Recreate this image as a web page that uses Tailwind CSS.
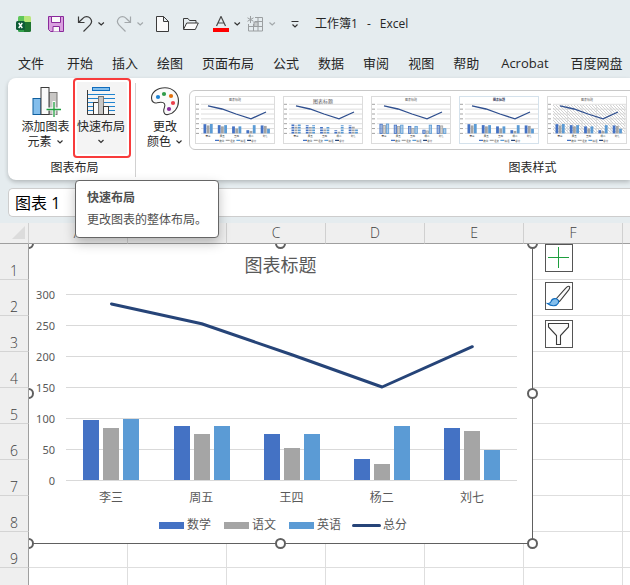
<!DOCTYPE html>
<html lang="zh-CN">
<head>
  <meta charset="UTF-8">
  <meta name="viewport" content="width=device-width, initial-scale=1.0">
  <title>工作簿1 - Excel</title>
  <script src="https://cdn.jsdelivr.net/npm/@tailwindcss/browser@4"></script>
</head>
<body class="h-screen overflow-hidden flex flex-col bg-[#e5ecef] text-[#262626] font-['Open_Sans','Noto_Sans_CJK_SC',sans-serif]">

  <!-- Title bar -->
  <header class="h-12 shrink-0 flex items-center pl-4 text-xs whitespace-nowrap">
    <svg class="w-4 h-4 shrink-0" viewBox="0 0 16 16">
      <path d="M2 1.500a1.500 1.500 0 0 1 1.500-1.500H8v6H2z" fill="#5fc65a"/>
      <path d="M8 0h5.500a1.500 1.500 0 0 1 1.500 1.500V6H8z" fill="#b9e67a"/>
      <path d="M2 6h6v10H3.500A1.500 1.500 0 0 1 2 14.500z" fill="#33a04b"/>
      <path d="M8 6h7v8.500a1.500 1.500 0 0 1-1.500 1.500H8z" fill="#1e7430"/>
      <rect x="0" y="5" width="9" height="9" rx="1.500" fill="#0e5c37"/>
      <path d="M2.700 7l3.600 5M6.300 7l-3.600 5" stroke="#fff" stroke-width="1.400"/>
    </svg>
    <button class="ml-4" aria-label="保存">
      <svg class="w-4 h-4" viewBox="0 0 16 16" fill="none" stroke="#8a2a9b">
        <path d="M.5.5h15v15h-13l-2-2z" fill="#d9a0df"/>
        <path d="M3.500.5h9v6h-9z" fill="#fafafa"/>
        <path d="M5 15.500v-5h6.500v5" fill="#fafafa"/>
      </svg>
    </button>
    <button class="ml-3 flex items-center" aria-label="撤消">
      <svg class="w-[18px] h-[18px]" viewBox="0 0 18 18" fill="none" stroke="#3b3b3b" stroke-width="1.200">
        <path d="M2.500 1.500v6h6M2.500 7.500L7 3.200c2-2 5.300-2 7.100 0s1.800 4.700 0 6.600L7.500 16.500"/>
      </svg>
      <svg class="w-2 h-2 ml-[3px]" viewBox="0 0 8 8" fill="none" stroke="#333" stroke-width="1.200"><path d="M1.500 2.500L4.200 5l2.700-2.500"/></svg>
    </button>
    <button class="ml-2 flex items-center" aria-label="恢复" disabled>
      <svg class="w-[18px] h-[18px] ml-[2px]" viewBox="0 0 18 18" fill="none" stroke="#a3a8ab" stroke-width="1.200">
        <path d="M15.500 1.500v6h-6M15.500 7.500L11 3.200c-2-2-5.300-2-7.100 0s-1.800 4.700 0 6.600l6.600 6.700"/>
      </svg>
      <svg class="w-2 h-2 ml-[3px]" viewBox="0 0 8 8" fill="none" stroke="#a3a8ab" stroke-width="1.200"><path d="M1.500 2.500L4.200 5l2.700-2.500"/></svg>
    </button>
    <button class="ml-3" aria-label="新建">
      <svg class="w-[13px] h-4" viewBox="0 0 13 16" fill="#fafafa" stroke="#3b3b3b">
        <path d="M.5.5h7l5 5v10H.5zM7.500.5v5h5"/>
      </svg>
    </button>
    <button class="ml-[14px]" aria-label="打开">
      <svg class="w-4 h-[14px]" viewBox="0 0 16 14" fill="none" stroke="#3b3b3b">
        <path d="M.5 12V1.500h4.500l1.500 2h6.500v2.500"/>
        <path d="M.5 12.500L3.700 6h11.600l-3 6.500z" fill="#fafafa"/>
      </svg>
    </button>
    <button class="ml-[14px] flex items-center" aria-label="字体颜色">
      <svg class="w-4 h-4" viewBox="0 0 16 16">
        <path d="M3.500 10L8 .5 12.500 10M5 7h6" fill="none" stroke="#4a4a4a" stroke-width="1.200"/>
        <rect y="12" width="16" height="4" fill="#f00"/>
      </svg>
      <svg class="w-2 h-2 ml-1" viewBox="0 0 8 8" fill="none" stroke="#333" stroke-width="1.200"><path d="M1.500 2.500L4.200 5l2.700-2.500"/></svg>
    </button>
    <button class="ml-[6px] flex items-center" aria-label="插入表格" disabled>
      <svg class="w-4 h-4" viewBox="0 0 16 16" fill="none" stroke="#9b9fa1">
        <path d="M8 1.500h7.500v13.500H1.500V8M8 5.500h7.500M1.500 10.500h14M6.500 8v7M11 1.500v13.500"/>
        <path d="M7 6h4v4.500H7z" fill="#c9cdce"/>
        <path d="M3.500 0v7M.5 1.800l6 3.500M6.500 1.800l-6 3.500"/>
      </svg>
      <svg class="w-2 h-2 ml-[5px]" viewBox="0 0 8 8" fill="none" stroke="#a3a8ab" stroke-width="1.200"><path d="M1.500 2.500L4.200 5l2.700-2.500"/></svg>
    </button>
    <button class="ml-[15px]" aria-label="自定义快速访问工具栏">
      <svg class="w-2 h-2" viewBox="0 0 8 8" fill="none" stroke="#333" stroke-width="1.200"><path d="M.5 1.500h7M1.500 4.500L4 7l2.500-2.500"/></svg>
    </button>
    <h1 class="ml-4 flex gap-[9px]"><span>工作簿1</span><span>-</span><span>Excel</span></h1>
  </header>

  <!-- Ribbon tabs -->
  <nav class="h-[30px] shrink-0 flex items-center gap-[19px] pl-[18px] pt-px text-[13px] whitespace-nowrap">
    <a href="#" class="mr-1">文件</a>
    <a href="#">开始</a>
    <a href="#">插入</a>
    <a href="#">绘图</a>
    <a href="#">页面布局</a>
    <a href="#">公式</a>
    <a href="#">数据</a>
    <a href="#">审阅</a>
    <a href="#">视图</a>
    <a href="#">帮助</a>
    <a href="#" class="px-[3px]">Acrobat</a>
    <a href="#">百度网盘</a>
  </nav>

  <!-- Ribbon -->
  <div class="relative shrink-0 ml-2">
    <div class="h-[102px] flex overflow-hidden bg-white rounded-l-lg text-xs whitespace-nowrap">
      <section class="shrink-0 flex flex-col pl-[10px] pr-1">
        <div class="flex h-20">
          <button class="w-[55px] pt-[9px] flex flex-col items-center leading-[15px]">
            <svg class="w-[30px] h-8 shrink-0" viewBox="0 0 30 32" fill="none">
              <rect x="2" y="11.500" width="8" height="16" fill="#83beec" stroke="#0f5f9e"/>
              <rect x="18" y="5.500" width="8" height="22" fill="#c8c6c4" stroke="#797775"/>
              <rect x="10" y=".5" width="8" height="27" fill="#fafafa" stroke="#3b3b3b"/>
              <path d="M23 14v16M15 22h16" stroke="#fff" stroke-width="3"/>
              <path d="M23 15v15M15.500 22.500H30" stroke="#1e9e3e" stroke-width="1.300"/>
            </svg>
            <span>添加图表</span>
            <span class="flex items-center gap-1">元素
              <svg class="w-2 h-2" viewBox="0 0 8 8" fill="none" stroke="#333" stroke-width="1.200"><path d="M1.500 2.500L4 5l2.500-2.500"/></svg>
            </span>
          </button>
          <button class="w-[58px] pt-[7px] pr-[2px] flex flex-col items-center leading-[15px] rounded-sm border-2 border-[#f83b3b] bg-[#f4f4f4] shadow-[inset_0_0_0_2px_#fff]">
            <svg class="w-[30px] h-8 shrink-0" viewBox="0 0 30 32" fill="none">
              <path d="M2 7.500h27M2 11.500h27M2 15.500h27M2 19.500h27M2 23.500h27" stroke="#2083cf"/>
              <rect x="6.500" y=".5" width="17" height="3" fill="#83beec" stroke="#0f6cbd"/>
              <rect x="7.500" y="15.500" width="5" height="12" fill="#fafafa" stroke="#3b3b3b"/>
              <rect x="12.500" y="9.500" width="5" height="18" fill="#c8c6c4" stroke="#797775"/>
              <rect x="17.500" y="19.500" width="5" height="8" fill="#fafafa" stroke="#3b3b3b"/>
              <path d="M1.500 3v24.500H29" stroke="#3b3b3b"/>
            </svg>
            <span>快速布局</span>
            <svg class="w-2 h-[15px]" viewBox="0 0 8 15" fill="none" stroke="#333" stroke-width="1.200"><path d="M1.500 6L4 8.500 6.500 6"/></svg>
          </button>
        </div>
        <h2 class="leading-5 text-center">图表布局</h2>
      </section>
      <div class="shrink-0 w-px mt-[5px] mb-[3px] bg-[#d1d1d1]"></div>
      <section class="shrink-0 w-[788px] flex flex-col pl-[5px]">
        <div class="flex h-20">
          <button class="w-12 shrink-0 pt-[9px] flex flex-col items-center leading-[15px]">
            <svg class="w-[30px] h-8 shrink-0" viewBox="0 0 30 32">
              <path d="M15 .7C7 .7 1.500 5.500 1.500 11c0 3.500 2.500 5.500 5.500 4.800 3-.8 6-1.500 7.500 1 1.200 2-.5 4-.8 6.200-.3 3 1.300 5 4.300 4.500 6-1 10.500-6.500 10.500-13.500C28.500 6 22.500.7 15 .7z" fill="#fafafa" stroke="#3b3b3b" stroke-width="1.100"/>
              <circle cx="8" cy="10" r="2.100" fill="#1a80d3"/>
              <circle cx="14" cy="7" r="2.100" fill="#2e9b48"/>
              <circle cx="21" cy="9" r="2.100" fill="#e2700b"/>
              <circle cx="23" cy="16" r="2.100" fill="#ea3e4a"/>
              <circle cx="19" cy="22" r="2.100" fill="#8a2a9b"/>
            </svg>
            <span>更改</span>
            <span class="flex items-center gap-1">颜色
              <svg class="w-2 h-2" viewBox="0 0 8 8" fill="none" stroke="#333" stroke-width="1.200"><path d="M1.500 2.500L4 5l2.500-2.500"/></svg>
            </span>
          </button>
          <div id="styleGallery" class="flex-1 h-[60px] mt-3 mr-4 p-[5px] flex gap-2 border border-[#c8c8c8] rounded-md"></div>
        </div>
        <h2 class="leading-5 text-center">图表样式</h2>
      </section>
    </div>
    <div class="absolute inset-0 rounded-l-lg shadow-[0_2px_4px_rgba(0,0,0,0.22)] pointer-events-none"></div>

    <!-- Quick layout tooltip -->
    <div role="tooltip" class="absolute z-20 left-[67px] top-[102px] px-[11px] h-[58px] flex flex-col justify-center gap-1 bg-white border border-[#666] rounded-[4px] shadow-[0_5px_12px_rgba(0,0,0,0.25)] text-xs leading-[18px] text-[#505050] whitespace-nowrap">
      <strong class="font-bold">快速布局</strong>
      <span>更改图表的整体布局。</span>
    </div>
  </div>

  <!-- Name box -->
  <div class="shrink-0 h-[29px] mt-2 mb-[6px] ml-2 flex bg-white border border-r-0 border-[#cdcdcd] rounded-l-[5px]">
    <input aria-label="名称框" value="图表 1" class="w-24 px-[6px] text-base leading-6 text-black outline-none">
    <input aria-label="编辑栏" class="flex-1 min-w-0 outline-none">
  </div>

  <!-- Worksheet -->
  <main class="relative flex-1 overflow-hidden bg-white">
    <table class="table-fixed w-[722px] border-separate border-spacing-0 text-[14px] text-[#404040] font-['Open_Sans','Noto_Sans_CJK_SC',sans-serif]">
      <thead>
        <tr id="columnHeads" class="h-[21px]">
          <th class="w-[29px] p-0 bg-[#efefef] border-b border-r border-b-[#9f9f9f] border-r-[#d0d0d0]">
            <svg class="w-[14px] h-[14px] ml-3" viewBox="0 0 14 14"><path d="M13 0v13H0z" fill="#dcdcdc"/></svg>
          </th>
        </tr>
      </thead>
      <tbody id="sheetRows"></tbody>
    </table>

    <div class="absolute left-[29px] top-[21px] right-0 bottom-0 overflow-hidden">
      <!-- Chart object -->
      <div class="absolute -left-px -top-px w-[505px] h-[301px]">
        <figure class="h-full flex flex-col bg-white border border-[#606060] text-[#595959] font-['Noto_Sans','Noto_Sans_CJK_SC',sans-serif]">
          <figcaption class="pt-[7px] text-center text-[18px] leading-7">图表标题</figcaption>
          <div class="flex text-[11px]">
            <div class="w-[26px] mr-[11px] shrink-0 text-right leading-[31px]">
              <div>300</div><div>250</div><div>200</div><div>150</div><div>100</div><div>50</div><div>0</div>
            </div>
            <div class="flex-1 mr-[15px]">
              <svg id="plot" class="block w-full h-[208px]" viewBox="0 0 451 208"></svg>
              <div class="grid grid-cols-5 text-center text-xs leading-[22px]">
                <span>李三</span><span>周五</span><span>王四</span><span>杨二</span><span>刘七</span>
              </div>
            </div>
          </div>
          <div class="mt-[6px] pl-[130px] flex gap-[13px] text-xs leading-5">
            <span class="flex items-center gap-[3px]"><i class="w-[25px] h-[7px] bg-[#4472c4]"></i>数学</span>
            <span class="flex items-center gap-[3px]"><i class="w-[25px] h-[7px] bg-[#a5a5a5]"></i>语文</span>
            <span class="flex items-center gap-[3px]"><i class="w-[25px] h-[7px] bg-[#5b9bd5]"></i>英语</span>
            <span class="flex items-center gap-[2px] -ml-[2px]"><i class="w-[29px] h-[3px] rounded-full bg-[#264478]"></i>总分</span>
          </div>
        </figure>
        <!-- Resize handles -->
        <span class="absolute left-[-5px] top-[-5px] size-[11px] rounded-full bg-white border-2 border-[#606060]"></span>
        <span class="absolute left-[247px] top-[-5px] size-[11px] rounded-full bg-white border-2 border-[#606060]"></span>
        <span class="absolute left-[499px] top-[-5px] size-[11px] rounded-full bg-white border-2 border-[#606060]"></span>
        <span class="absolute left-[-5px] top-[145px] size-[11px] rounded-full bg-white border-2 border-[#606060]"></span>
        <span class="absolute left-[499px] top-[145px] size-[11px] rounded-full bg-white border-2 border-[#606060]"></span>
        <span class="absolute left-[-5px] top-[295px] size-[11px] rounded-full bg-white border-2 border-[#606060]"></span>
        <span class="absolute left-[247px] top-[295px] size-[11px] rounded-full bg-white border-2 border-[#606060]"></span>
        <span class="absolute left-[499px] top-[295px] size-[11px] rounded-full bg-white border-2 border-[#606060]"></span>
      </div>

      <!-- Chart side buttons -->
      <div class="absolute left-[516px] top-0 flex flex-col gap-[10px]">
        <button class="size-7 bg-white border border-[#555]" aria-label="图表元素">
          <svg class="size-[26px]" viewBox="0 0 26 26" stroke="#1e9e3e"><path d="M12.500 2v21M2 12.500h21"/></svg>
        </button>
        <button class="size-7 bg-white border border-[#555]" aria-label="图表样式">
          <svg class="size-[26px]" viewBox="0 0 26 26">
            <path d="M10 16L19.500 5.300c1.300-1.400 3-2.300 3.800-1.900s.4 2.300-.7 3.800L13.500 18.500z" fill="#fafafa" stroke="#3b3b3b" stroke-width="1.100"/>
            <path d="M1.500 20.500c2 .3 2.800-.2 3.500-2 .8-2.200 3-3.300 5.200-2.700 2 .6 3 2.500 2 4.400-1.600 3-6.700 3.600-10.700.3z" fill="#83beec" stroke="#0f6cbd" stroke-width="1.100"/>
          </svg>
        </button>
        <button class="size-7 bg-white border border-[#555]" aria-label="图表筛选器">
          <svg class="size-[26px]" viewBox="0 0 26 26"><path d="M2.500 2.500h20v3.500l-8 8.500v9h-4v-9l-8-8.500z" fill="#fafafa" stroke="#3b3b3b" stroke-width="1.100"/></svg>
        </button>
      </div>
    </div>
  </main>

  <script>
    const scores = [
      [97, 84, 99],
      [87, 74, 87],
      [74, 52, 74],
      [34, 26, 87],
      [84, 79, 49]
    ];
    const colors = ['#4472c4', '#a5a5a5', '#5b9bd5'];
    const totals = [284, 252, 202, 150, 215];

    // Worksheet grid, last column and row are only partly in view
    const cols = ['A', 'B', 'C', 'D', 'E', 'F', ''];
    cols.forEach(name => {
      document.getElementById('columnHeads').insertAdjacentHTML('beforeend',
        `<th class="w-[99px] p-0 h-[21px] leading-5 font-light bg-[#efefef] border-b border-r border-b-[#9f9f9f] border-r-[#d0d0d0]">${name}</th>`);
    });
    for (let r = 1; r <= 10; r++) {
      document.getElementById('sheetRows').insertAdjacentHTML('beforeend', `
        <tr class="h-9">
          <th class="p-0 align-bottom leading-4 font-light bg-[#efefef] border-b border-r border-b-[#d4d4d4] border-r-[#9f9f9f]">${r < 10 ? r : ''}</th>
          ${cols.map(() => '<td class="p-0 border-b border-r border-[#dedede]"></td>').join('')}
        </tr>`);
    }

    // Main chart, 31px per 50 points
    const base = 201;
    let plot = '';
    for (let i = 0; i < 7; i++) {
      plot += `<path d="M0 ${15.5 + i * 31}h451" stroke="#d9d9d9"/>`;
    }
    scores.forEach((row, g) => row.forEach((v, s) => {
      const h = Math.round(v * 0.62);
      plot += `<rect x="${17 + Math.ceil(g * 90.2) + s * 20}" y="${base - h}" width="16" height="${h}" fill="${colors[s]}"/>`;
    }));
    const line = totals.map((v, i) => `${45.5 + i * 90.2},${base - v * 0.62}`).join(' ');
    plot += `<polyline points="${line}" fill="none" stroke="#264478" stroke-width="3" stroke-linecap="round" stroke-linejoin="round"/>`;
    document.getElementById('plot').innerHTML = plot;

    // Style gallery thumbnails
    const styles = [
      { name: '样式 1', border: '#dcdcdc', title: '#595959' },
      { name: '样式 2', border: '#dcdcdc', title: '#595959', dashed: true, size: 5 },
      { name: '样式 3', border: '#dcdcdc', title: '#595959', outline: true },
      { name: '样式 4', border: '#d5e2ec', title: '#1f2f4f', bold: true },
      { name: '样式 5', border: '#dcdcdc', title: '#595959', hatch: true }
    ];
    styles.forEach(st => {
      let g = '<defs><pattern id="hatch" width="3" height="3" patternUnits="userSpaceOnUse"><path d="M0 0l3 3" stroke="#b5b5b5" stroke-width=".6"/></pattern></defs>';
      if (st.hatch) g += '<rect x="6" y="9" width="72" height="28" fill="url(#hatch)"/><path d="M20.500 9v28M35 9v28M49.500 9v28M64 9v28M78 9v28" stroke="#dcdcdc" stroke-width=".8"/>';
      for (let i = 0; i < 7; i++) {
        const y = 8.3 + i * 4.85;
        g += `<path d="M6 ${y}h73" stroke="#d4d4d4" stroke-width=".8"/><path d="M1 ${y}h3" stroke="#999" stroke-width=".9"/>`;
      }
      scores.forEach((row, n) => row.forEach((v, s) => {
        const h = v * 0.095;
        const x = 8.5 + n * 14.3 + s * 3.2;
        if (st.dashed) {
          g += `<path d="M${x + 1.4} 37.400v-${h}" stroke="${colors[s]}" stroke-width="2.800" stroke-dasharray="1.600 .8"/>`;
        } else if (st.outline) {
          g += `<rect x="${x + 0.4}" y="${37.4 - h}" width="2.400" height="${h}" fill="${colors[s]}" fill-opacity=".5" stroke="${colors[s]}" stroke-width=".8"/>`;
        } else {
          g += `<rect x="${x}" y="${37.4 - h}" width="2.800" height="${h}" fill="${colors[s]}"/>`;
        }
      }));
      g += '<polyline points="13,9.800 27,13 41,18 56,22.800 71,16" fill="none" stroke="#2f4f8f" stroke-width="1.300"/>';
      ['李三', '周五', '王四', '杨二', '刘七'].forEach((t, i) => {
        g += `<text x="${13 + i * 14.3}" y="41.300" font-size="2.500" text-anchor="middle" fill="#333">${t}</text>`;
      });
      ['数学', '语文', '英语', '总分'].forEach((t, i) => {
        g += `<path d="M${20 + i * 10.7} 44.300h4" stroke="${colors[i] || '#264478'}" stroke-width="1.300"/><text x="${24.2 + i * 10.7}" y="45.500" font-size="2.500" fill="#333">${t}</text>`;
      });
      g += `<text x="40" y="${st.size ? 6.6 : 5.3}" font-size="${st.size || 3}" font-weight="${st.bold ? 700 : 400}" text-anchor="middle" fill="${st.title}">图表标题</text>`;
      document.getElementById('styleGallery').insertAdjacentHTML('beforeend', `
        <button class="shrink-0 w-20 h-12" aria-label="${st.name}">
          <svg class="block w-20 h-12" viewBox="0 0 80 48"><rect x=".5" y=".5" width="79" height="47" fill="#fff" stroke="${st.border}"/>${g}</svg>
        </button>`);
    });
  </script>
</body>
</html>
